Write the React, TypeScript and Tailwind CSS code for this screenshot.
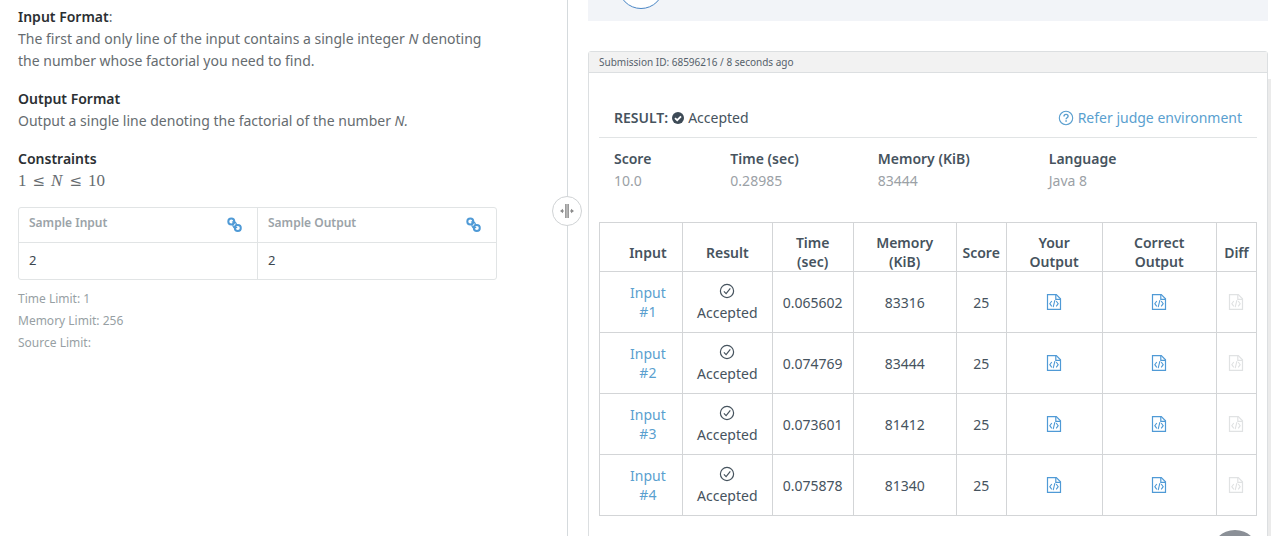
import React from "react";

type TestCase = { id: number; time: string; memory: number; score: number };

const testCases: TestCase[] = [
  { id: 1, time: "0.065602", memory: 83316, score: 25 },
  { id: 2, time: "0.074769", memory: 83444, score: 25 },
  { id: 3, time: "0.073601", memory: 81412, score: 25 },
  { id: 4, time: "0.075878", memory: 81340, score: 25 },
];

const stats = [
  { label: "Score", value: "10.0" },
  { label: "Time (sec)", value: "0.28985" },
  { label: "Memory (KiB)", value: "83444" },
  { label: "Language", value: "Java 8" },
];

function ChainIcon() {
  return (
    <svg className="h-4 w-4" viewBox="0 0 16 16" fill="none" stroke="#4f9ad6" strokeWidth="2">
      <circle cx="4.3" cy="4.6" r="3" />
      <circle cx="10.8" cy="11" r="3" />
      <path d="M5 5.200c3.200-1.200 4.800.6 4.200 3.400M10.200 10.400c-3.200 1.200-4.800-.6-4.200-3.400" strokeWidth="1.300" />
    </svg>
  );
}

function CodeFileIcon() {
  return (
    <svg className="h-4 w-4" viewBox="0 0 16 16" fill="none" stroke="currentColor">
      <path d="M1.500.6h8.800l4.200 4.200v10.600h-13z" strokeWidth="1.200" />
      <path d="M9.800.6v4.700h4.700" strokeWidth="1.200" />
      <path d="M5.800 7 3.800 9.700l2 2.700M10.200 7l2 2.700-2 2.700M8.900 6.200l-1.700 7" strokeWidth="1.100" />
    </svg>
  );
}

function CheckCircleIcon() {
  return (
    <svg className="h-4 w-4" viewBox="0 0 16 16" fill="none" stroke="#46535e" strokeWidth="1.2">
      <circle cx="8" cy="8" r="6.6" />
      <path d="m4.9 8.4 2.2 2.3 4.2-5.3" />
    </svg>
  );
}

function SolidCheckIcon() {
  return (
    <svg className="h-3 w-3" viewBox="0 0 12 12">
      <circle cx="6" cy="6" r="6" fill="#3d4a56" />
      <path d="m3 6.1 2.2 2.1L9 4.3" fill="none" stroke="#fff" strokeWidth="1.8" />
    </svg>
  );
}

function HelpIcon() {
  return (
    <svg className="h-4 w-4" viewBox="0 0 16 16" fill="none" stroke="currentColor">
      <circle cx="8" cy="8" r="6.7" strokeWidth="1.1" />
      <path d="M6 6.4c0-1.3.9-2 2.1-2 1.200 0 2 .7 2 1.800 0 1.500-2 1.500-2 3.100" strokeWidth="1.400" />
      <path d="M8.100 10.300v1.400" strokeWidth="1.500" />
    </svg>
  );
}

function SplitIcon() {
  return (
    <svg className="h-4 w-4" viewBox="0 0 16 16">
      <path d="M6 1h4v14H6z" fill="#b5b5b5" />
      <path d="M6.500 1v14M9.500 1v14" stroke="#9c9c9c" />
      <path d="M1 8l3-2.200v4.400zM15 8l-3-2.200v4.400z" fill="#8c8c8c" />
      <path d="M3 8h2M11 8h2" stroke="#8c8c8c" />
    </svg>
  );
}

function Heading({ children }: { children: React.ReactNode }) {
  return <strong className="font-semibold text-[#2b2f33]">{children}</strong>;
}

function Sample({ title }: { title: string }) {
  return (
    <th className="h-[35px] w-1/2 border border-[#e1e4e5] px-2.5 text-left font-semibold text-[#9ba3a8]">
      <div className="flex items-center justify-between pr-1">
        <span className="pb-1">{title}</span>
        <button type="button" aria-label={`Copy ${title}`}>
          <ChainIcon />
        </button>
      </div>
    </th>
  );
}

function Problem() {
  return (
    <section className="w-[567px] shrink-0 pt-1.5 pr-[70px] pl-[18px] text-[14px] leading-[22px] text-[#666c70]">
      <p className="mb-4">
        <Heading>Input Format</Heading>:<br />
        The first and only line of the input contains a single integer <em>N</em> denoting the number whose factorial
        you need to find.
      </p>
      <p className="mb-4">
        <Heading>Output Format</Heading>
        <br />
        Output a single line denoting the factorial of the number <em>N.</em>
      </p>
      <h3>
        <Heading>Constraints</Heading>
      </h3>
      <p className="mb-[15px] flex gap-[6px] font-['Liberation_Serif',serif] text-[17px]">
        <span>1</span>
        <span className="font-['DejaVu_Serif',serif] text-[15px]">≤</span>
        <em className="pr-px">N</em>
        <span className="font-['DejaVu_Serif',serif] text-[15px]">≤</span>
        <span>10</span>
      </p>
      <div className="overflow-hidden rounded-[3px] border border-[#e1e4e5]">
        <table className="-m-px w-[calc(100%+2px)] table-fixed border-collapse text-[12px]">
          <thead>
            <tr>
              <Sample title="Sample Input" />
              <Sample title="Sample Output" />
            </tr>
          </thead>
          <tbody>
            <tr className="text-[13px] text-[#3d474f]">
              <td className="h-[37px] border border-[#e1e4e5] px-2.5 pb-0.5">2</td>
              <td className="h-[37px] border border-[#e1e4e5] px-2.5 pb-0.5">2</td>
            </tr>
          </tbody>
        </table>
      </div>
      <div className="mt-2 text-[12px] text-[#979fa4]">
        <p>Time Limit: 1</p>
        <p>Memory Limit: 256</p>
        <p>Source Limit:</p>
      </div>
    </section>
  );
}

function FileButton({ label, disabled = false }: { label: string; disabled?: boolean }) {
  return (
    <button
      type="button"
      aria-label={label}
      disabled={disabled}
      className="mx-auto block text-[#4f9ad6] disabled:text-[#e0e2e3]"
    >
      <CodeFileIcon />
    </button>
  );
}

function Results() {
  const head = "border border-[#d3d5d7] pt-2.5 font-semibold";
  const cell = "border border-[#d3d5d7]";
  return (
    <table className="w-full table-fixed border-collapse text-center text-[14px] leading-[19px] text-[#46535e]">
      <colgroup>
        <col className="w-[12.6%]" />
        <col className="w-[13.7%]" />
        <col className="w-[12.3%]" />
        <col className="w-[15.7%]" />
        <col className="w-[7.6%]" />
        <col className="w-[14.6%]" />
        <col className="w-[17.4%]" />
        <col className="w-[6.1%]" />
      </colgroup>
      <thead>
        <tr className="h-[49px]">
          <th className={`${head} pl-3.5`}>Input</th>
          <th className={head}>Result</th>
          <th className={head}>Time<br />(sec)</th>
          <th className={head}>Memory<br />(KiB)</th>
          <th className={head}>Score</th>
          <th className={head}>Your<br />Output</th>
          <th className={head}>Correct<br />Output</th>
          <th className={head}>Diff</th>
        </tr>
      </thead>
      <tbody>
        {testCases.map((test) => (
          <tr key={test.id} className="h-[61px]">
            <td className={`${cell} pl-3.5`}>
              <a href="#input" className="text-[#5a9fcf]">
                Input<br />#{test.id}
              </a>
            </td>
            <td className={cell}>
              <div className="flex flex-col items-center gap-1">
                <CheckCircleIcon />
                Accepted
              </div>
            </td>
            <td className={cell}>{test.time}</td>
            <td className={cell}>{test.memory}</td>
            <td className={cell}>{test.score}</td>
            <td className={cell}>
              <FileButton label="Your output" />
            </td>
            <td className={cell}>
              <FileButton label="Correct output" />
            </td>
            <td className={cell}>
              <FileButton label="Diff" disabled />
            </td>
          </tr>
        ))}
      </tbody>
    </table>
  );
}

export default function App() {
  return (
    <main className="relative flex h-screen overflow-hidden bg-white font-['Noto_Sans',sans-serif]">
      <Problem />
      <div className="relative w-px shrink-0 bg-[#d5dadd]">
        <button
          type="button"
          aria-label="Resize panels"
          className="absolute top-[196px] -left-[15px] flex h-[30px] w-[30px] items-center justify-center rounded-full border border-[#d0d3d5] bg-white"
        >
          <SplitIcon />
        </button>
      </div>
      <section className="min-w-0 flex-1 pl-5">
        <div className="relative mb-[30px] h-[21px] overflow-hidden bg-[#f2f4f8]">
          <div className="absolute bottom-3 left-[30px] h-[46px] w-[46px] rounded-full border border-[#4a86c5] bg-white" />
        </div>
        <article className="rounded-t-[3px] border border-[#dcdfe1]">
          <header className="border-b border-[#dcdfe1] bg-[#f2f2f2] px-2.5 text-[10px] leading-5 text-[#55616b]">
            Submission ID: 68596216 / 8 seconds ago
          </header>
          <div className="px-2.5 pt-[34px] pb-10 text-[14px] leading-[22px] text-[#46535e]">
            <div className="flex items-center justify-between border-b border-[#e1e4e5] pr-[15px] pb-2 pl-[15px]">
              <div className="flex items-center gap-1">
                <strong className="font-semibold">RESULT:</strong>
                <SolidCheckIcon />
                <span>Accepted</span>
              </div>
              <a href="#judge" className="flex items-center gap-1 text-[#5a9fcf]">
                <HelpIcon />
                Refer judge environment
              </a>
            </div>
            <dl className="flex gap-[79px] pt-2.5 pb-[30px] pl-[15px]">
              {stats.map((stat) => (
                <div key={stat.label}>
                  <dt className="font-semibold">{stat.label}</dt>
                  <dd className="text-[#9ba1a6]">{stat.value}</dd>
                </div>
              ))}
            </dl>
            <Results />
          </div>
        </article>
      </section>
      <div className="flex w-[3px] shrink-0 pt-[79px]">
        <div className="flex-1 bg-[#ebebeb]" />
      </div>
      <button
        type="button"
        aria-label="Help"
        className="absolute right-3 -bottom-[42px] h-12 w-12 rounded-full bg-[#8b9097]"
      />
    </main>
  );
}
